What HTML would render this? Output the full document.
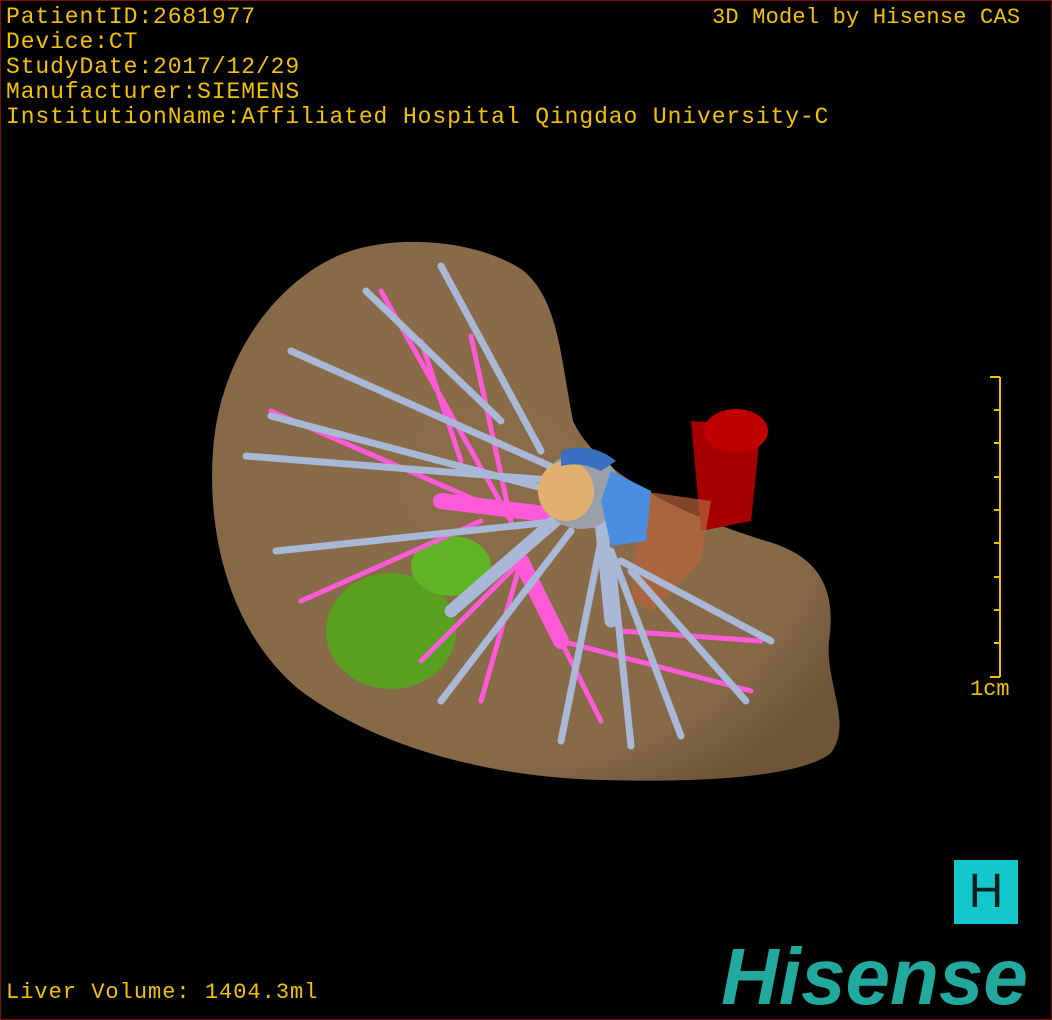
<!DOCTYPE html>
<html><head><meta charset="utf-8"><style>
html,body{margin:0;padding:0;background:#000}
#w{position:relative;width:1050px;height:1018px;border:1px solid #7a1010;overflow:hidden;background:#000}
.t{position:absolute;font-family:"Liberation Mono",monospace;color:#f2c200;font-size:23px;line-height:25px;white-space:pre}
</style></head><body><div id="w">
<svg width="1050" height="1018" style="position:absolute;left:0;top:0">
<defs><radialGradient id="lv" cx="45%" cy="45%" r="65%"><stop offset="0" stop-color="#8a6c48"/><stop offset="0.8" stop-color="#866a48"/><stop offset="1" stop-color="#6e5538"/></radialGradient></defs>
<path d="M330 258 C380 232 470 236 520 268 C558 296 560 360 572 420 C600 480 700 520 765 540 C822 556 835 592 828 640 C824 682 852 722 830 752 C800 776 700 782 600 779 C480 776 370 742 300 690 C238 640 205 550 212 450 C218 360 270 288 330 258 Z" fill="url(#lv)"/>
<path d="M690 420 L760 425 L750 520 L700 530 Z" fill="#a50000"/>
<ellipse cx="735" cy="430" rx="32" ry="22" fill="#c00000"/>
<path d="M640 490 L710 500 L700 560 L650 610 L630 600 Z" fill="#b8643a" opacity="0.7"/>
<ellipse cx="390" cy="630" rx="65" ry="58" fill="#5aa020"/>
<ellipse cx="450" cy="565" rx="40" ry="30" fill="#5fb526"/>
<g stroke="#ff5ad8" stroke-linecap="round" fill="none">
<path d="M510 520 L380 290 M460 460 L420 340 M510 520 L470 335 M500 510 L270 410 M480 520 L300 600 M520 560 L420 660 M540 600 L600 720 M560 640 L750 690 M620 630 L760 640 M520 560 L480 700" stroke-width="5"/>
<path d="M440 500 L600 520 M520 560 L560 640" stroke-width="16"/>
</g>
<g stroke="#a8b8d6" stroke-linecap="round" fill="none" stroke-width="7">
<path d="M590 500 L270 415 M560 480 L245 455 M560 470 L290 350 M540 450 L440 265 M500 420 L365 290 M560 520 L275 550 M570 530 L440 700 M600 540 L560 740 M610 550 L630 745 M610 550 L680 735 M620 560 L770 640 M630 570 L745 700"/>
<path d="M600 480 L450 610 M600 520 L610 620" stroke-width="13"/>
</g>
<ellipse cx="580" cy="490" rx="40" ry="38" fill="#9aa0a8"/>
<ellipse cx="565" cy="490" rx="28" ry="30" fill="#e0b070"/>
<path d="M610 470 L650 490 L645 540 L610 545 L600 500 Z" fill="#4a8ee0"/>
<path d="M560 450 Q590 440 615 460 L600 470 Q580 460 560 465 Z" fill="#3a70c0"/>
<path d="M999 376 V676 M989 376 H999 M993 409 H999 M993 442 H999 M993 476 H999 M993 509 H999 M993 542 H999 M993 576 H999 M993 609 H999 M993 642 H999 M989 676 H999" stroke="#f2c200" stroke-width="2" fill="none"/>
</svg>
<div class="t" style="left:5px;top:4px;letter-spacing:0.9px">PatientID:2681977
Device:CT
StudyDate:2017/12/29
Manufacturer:SIEMENS
InstitutionName:Affiliated Hospital Qingdao University-C</div>
<div class="t" style="left:711px;top:4px;font-size:22px;letter-spacing:0.2px">3D Model by Hisense CAS</div>
<div class="t" style="left:969px;top:676px;font-size:22px">1cm</div>
<div class="t" style="left:5px;top:979px;font-size:22px;letter-spacing:1px">Liver Volume: 1404.3ml</div>
<div style="position:absolute;left:953px;top:859px;width:64px;height:64px;background:#13c8cc;color:#0a2020;font:48px/64px 'Liberation Sans',sans-serif;text-align:center">H</div>
<div style="position:absolute;left:720px;top:936px;color:#21a99e;font:italic bold 80px/80px 'Liberation Sans',sans-serif;letter-spacing:0px">Hisense</div>
</div></body></html>
